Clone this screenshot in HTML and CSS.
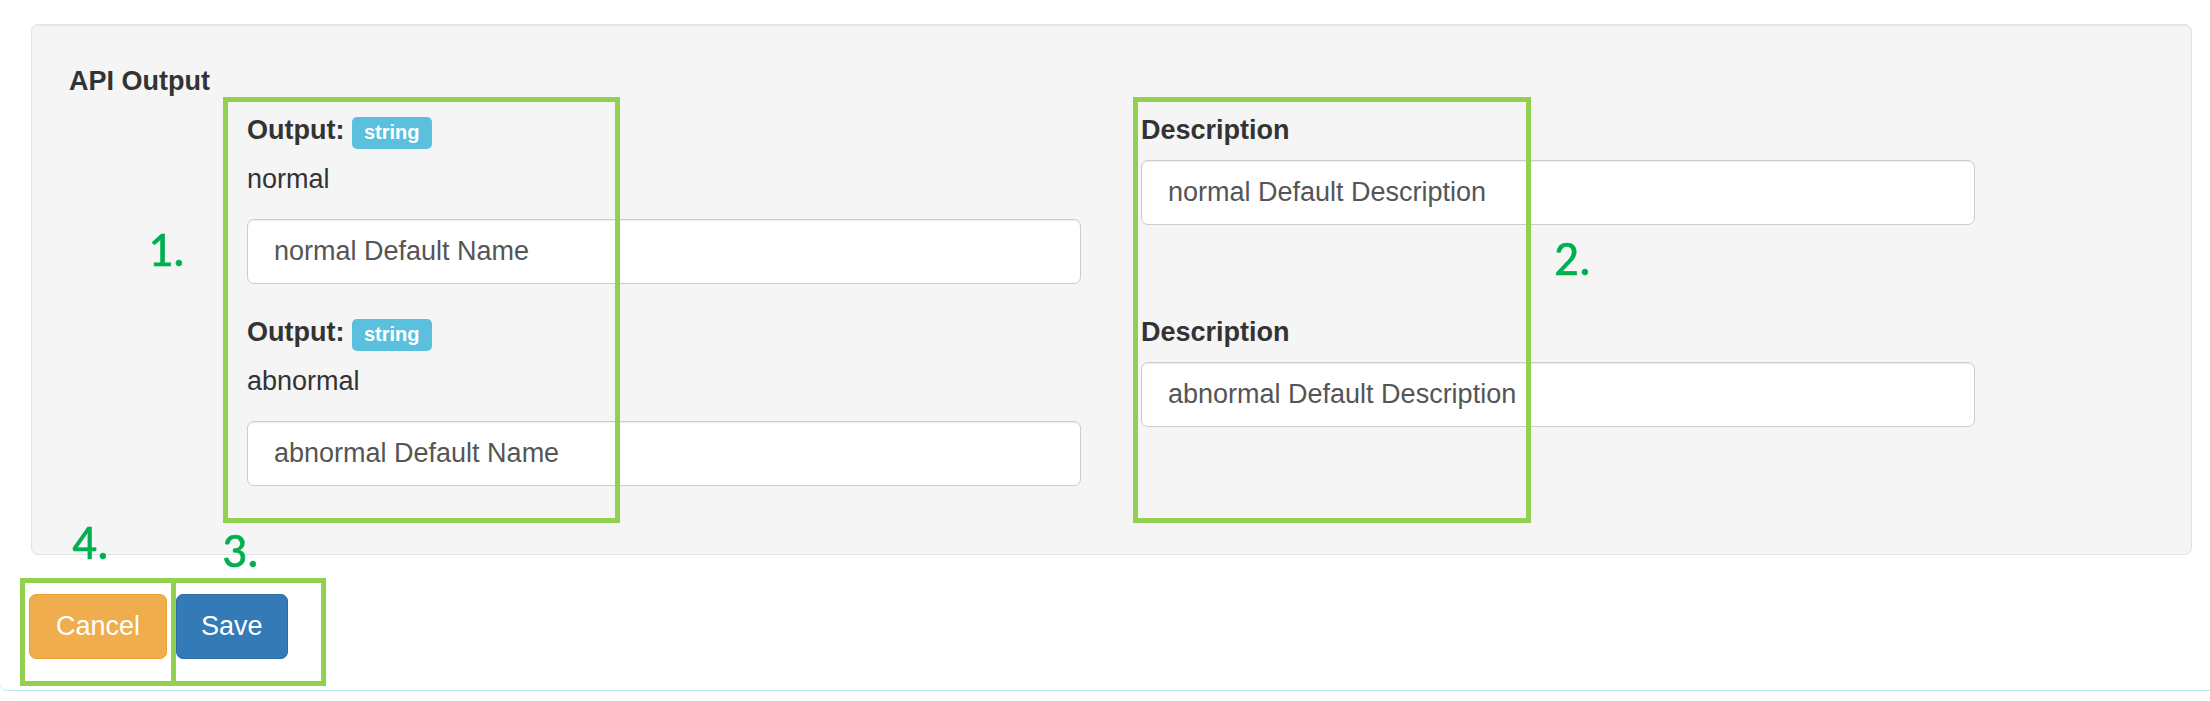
FILE: index.html
```html
<!DOCTYPE html>
<html lang="en">
<head>
<meta charset="utf-8">
<title>API Output</title>
<link rel="stylesheet" href="styles.css">
</head>
<body>
<div class="panel">
  <div class="well">
    <div class="section-title">API Output</div>
    <div class="output-row">
      <div class="col">
        <div class="field-label">Output: <span class="tag">string</span></div>
        <div class="field-name">normal</div>
        <input class="text-input" type="text" value="normal Default Name">
      </div>
      <div class="col">
        <div class="field-label">Description</div>
        <input class="text-input" type="text" value="normal Default Description">
      </div>
    </div>
    <div class="output-row">
      <div class="col">
        <div class="field-label">Output: <span class="tag">string</span></div>
        <div class="field-name">abnormal</div>
        <input class="text-input" type="text" value="abnormal Default Name">
      </div>
      <div class="col">
        <div class="field-label">Description</div>
        <input class="text-input" type="text" value="abnormal Default Description">
      </div>
    </div>
  </div>
  <div class="actions">
    <button class="btn btn-cancel" type="button">Cancel</button>
    <button class="btn btn-save" type="button">Save</button>
  </div>
</div>

<div class="mark mark-1"></div>
<div class="mark mark-2"></div>
<div class="mark mark-4"></div>
<div class="mark mark-3"></div>
<div class="num num-1">1.</div>
<div class="num num-2">2.</div>
<div class="num num-4">4.</div>
<div class="num num-3">3.</div>
</body>
</html>
```

FILE: styles.css
```css
html, body {
  margin: 0;
  padding: 0;
  background: #ffffff;
}

body {
  position: relative;
  width: 2210px;
  height: 701px;
  overflow: hidden;
  font-family: "Liberation Sans", Arial, sans-serif;
  font-size: 27px;
  line-height: 39px;
  color: #333333;
}

.panel {
  padding: 24px 18px 31px 29px;
  border-bottom: 1px solid #bce8f1;
  border-bottom-left-radius: 7px;
}

.well {
  margin-left: 2px;
  padding: 37px 37px 39px 37px;
  background: #f5f5f5;
  border: 1px solid #e3e3e3;
  border-radius: 7px;
  box-shadow: inset 0 1px 1px rgba(0, 0, 0, 0.05);
}

.section-title {
  font-weight: bold;
  margin-bottom: 10px;
}

.output-row {
  display: grid;
  grid-template-columns: 834px 834px;
  column-gap: 60px;
  margin-left: 178px;
  align-items: start;
}

.col {
  display: flex;
  flex-direction: column;
  margin-bottom: 29px;
}

.field-label {
  font-weight: bold;
  margin-bottom: 10px;
}

.tag {
  display: inline;
  background: #5bc0de;
  color: #ffffff;
  font-size: 20px;
  font-weight: bold;
  line-height: 1;
  padding: 4px 12px 6px;
  border-radius: 5px;
}

.field-name {
  margin-bottom: 20px;
}

.text-input {
  box-sizing: border-box;
  display: block;
  width: 100%;
  height: 65px;
  margin: 0;
  padding: 0 26px;
  font-family: "Liberation Sans", Arial, sans-serif;
  font-size: 27px;
  color: #555555;
  background: #ffffff;
  border: 1px solid #cccccc;
  border-radius: 7px;
  box-shadow: inset 0 1px 1px rgba(0, 0, 0, 0.075);
  outline: none;
}

.actions {
  display: flex;
  gap: 9px;
  margin-top: 39px;
}

.btn {
  box-sizing: border-box;
  height: 65px;
  margin: 0;
  font-family: "Liberation Sans", Arial, sans-serif;
  font-size: 27px;
  line-height: 39px;
  color: #ffffff;
  border: 1px solid transparent;
  border-radius: 7px;
  cursor: pointer;
}

.btn-cancel {
  padding: 0 26px;
  background: #f0ad4e;
  border-color: #eea236;
}

.btn-save {
  padding: 0 24px;
  background: #337ab7;
  border-color: #2e6da4;
}

/* annotation overlays */
.mark {
  position: absolute;
  box-sizing: border-box;
  border: 5px solid #92d050;
}

.mark-1 { left: 223px; top: 97px; width: 397px; height: 426px; }
.mark-2 { left: 1133px; top: 97px; width: 398px; height: 426px; }
.mark-4 { left: 20px; top: 578px; width: 156px; height: 108px; }
.mark-3 { left: 171px; top: 578px; width: 155px; height: 108px; }

.num {
  position: absolute;
  font-family: Carlito, Lato, "Open Sans", sans-serif;
  font-size: 49px;
  line-height: 49px;
  color: #00b050;
  -webkit-text-stroke: 0.6px #00b050;
}

.num-1 { left: 148px; top: 225px; }
.num-2 { left: 1554px; top: 234px; }
.num-4 { left: 72px; top: 518px; }
.num-3 { left: 222px; top: 526px; }
```
